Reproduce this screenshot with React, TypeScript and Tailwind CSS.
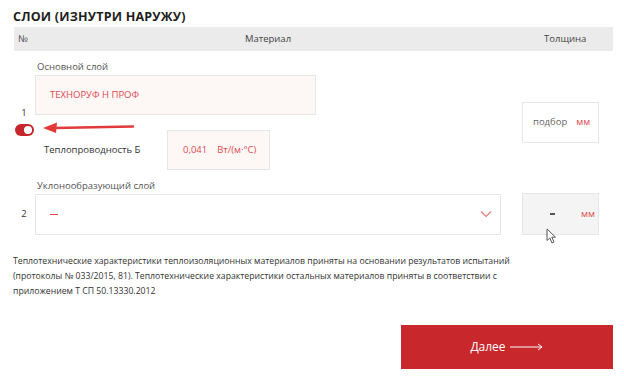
import React from "react";

const font = { fontFamily: '"Open Sans", "Noto Sans", Arial, sans-serif' };

function Toggle() {
  return (
    <div className="flex h-[12px] w-[19px] items-center justify-end rounded-full bg-[#c4262b] pr-[2px]">
      <div className="h-[8px] w-[8px] rounded-full bg-white" />
    </div>
  );
}

function Arrow() {
  return (
    <svg width="94" height="14" viewBox="0 0 94 14" className="absolute left-[41px] top-[120px]">
      <path d="M92 6.5 L14 8" stroke="#e23a3a" strokeWidth="2.4" strokeLinecap="round" />
      <path d="M2 8 L16 2.5 L15 13 Z" fill="#e23a3a" />
    </svg>
  );
}

function Cursor() {
  return (
    <svg width="12" height="16" viewBox="0 0 12 16" className="absolute left-[546px] top-[228px]">
      <path d="M1 1 L1 12.5 L3.8 10 L6 15 L8 14 L5.8 9.2 L9.5 9.2 Z" fill="#fff" stroke="#555" strokeWidth="1" strokeLinejoin="round" />
    </svg>
  );
}

export default function App() {
  return (
    <div className="relative h-[378px] w-[624px] overflow-hidden bg-white pl-[13px] pr-[11px] text-[#333]" style={font}>
      <h2 className="pt-[10px] text-[12.5px] font-bold leading-[14px] tracking-[0.2px] text-[#1e1e1e]">
        СЛОИ (ИЗНУТРИ НАРУЖУ)
      </h2>

      <div className="ml-[1px] mt-[3px] flex h-[24px] items-center bg-[#ebebeb] text-[9.5px] text-[#444]">
        <span className="w-[21px] pl-[4px]">№</span>
        <span className="w-[466px] text-center">Материал</span>
        <span className="flex-1 pl-[43px]">Толщина</span>
      </div>

      {/* слой 1 */}
      <div className="flex">
        <div className="flex w-[22px] flex-col items-center pt-[56px]">
          <span className="text-[9.5px] leading-[12px]">1</span>
          <div className="mt-[5px] pl-[1px]">
            <Toggle />
          </div>
        </div>
        <div className="w-[466px]">
          <div className="ml-[2px] mt-[8px] text-[9.5px] leading-[15px] text-[#555]">Основной слой</div>
          <div className="mt-[1px] flex h-[40px] w-[281px] items-center border border-[#e6e6e6] bg-[#fdf7f6] pl-[14px] text-[9.5px] text-[#e04a4f]">
            ТЕХНОРУФ Н ПРОФ
          </div>
          <div className="mt-[15px] flex items-center">
            <span className="w-[132px] pl-[9px] text-[9.5px] text-[#333]">Теплопроводность Б</span>
            <div className="flex h-[40px] w-[103px] items-center gap-[10px] border border-[#e6e6e6] bg-[#fdf7f6] pl-[15px] text-[9.5px] text-[#e04a4f]">
              <span>0,041</span>
              <span>Вт/(м·°С)</span>
            </div>
          </div>
        </div>
        <div className="ml-[21px] mt-[51px] flex h-[41px] w-[77px] items-center border border-[#e6e6e6] bg-white pl-[10px] text-[9.5px]">
          <span className="text-[#666]">подбор</span>
          <span className="ml-[9px] text-[#e04a4f]">мм</span>
        </div>
      </div>

      {/* слой 2 */}
      <div className="ml-[22px] mt-[8px] pl-[2px] text-[9.5px] leading-[15px] text-[#555]">Уклонообразующий слой</div>
      <div className="flex items-center">
        <span className="w-[22px] text-center text-[9.5px]">2</span>
        <div className="flex h-[41px] w-[466px] items-center justify-between border border-[#e6e6e6] bg-white pl-[14px] pr-[8px]">
          <div className="h-[1px] w-[8px] bg-[#e04a4f]" />
          <svg width="12" height="8" viewBox="0 0 12 8">
            <path d="M1 1.5 L6 6.5 L11 1.5" fill="none" stroke="#e27a7c" strokeWidth="1.2" />
          </svg>
        </div>
        <div className="ml-[21px] flex h-[42px] w-[77px] items-center border border-[#e6e6e6] bg-[#f4f4f4] text-[9.5px]">
          <div className="flex w-[58px] justify-center">
            <div className="h-[1.5px] w-[5px] bg-[#555]" />
          </div>
          <span className="text-[#e04a4f]">мм</span>
        </div>
      </div>

      <p className="mt-[19px] pr-[40px] text-[8.7px] leading-[15px] text-[#333]">
        Теплотехнические характеристики теплоизоляционных материалов приняты на основании результатов испытаний
        <br />
        (протоколы № 033/2015, 81). Теплотехнические характеристики остальных материалов приняты в соответствии с
        <br />
        приложением Т СП 50.13330.2012
      </p>

      <div className="absolute left-[401px] top-[325px] flex h-[44px] w-[212px] items-center justify-center gap-[4px] bg-[#c8272b] text-[12px] text-white">
        <span>Далее</span>
        <svg width="34" height="8" viewBox="0 0 34 8">
          <path d="M0 4 H32 M28 1 L32 4 L28 7" fill="none" stroke="#fff" strokeWidth="1" />
        </svg>
      </div>

      <Arrow />
      <Cursor />
    </div>
  );
}
